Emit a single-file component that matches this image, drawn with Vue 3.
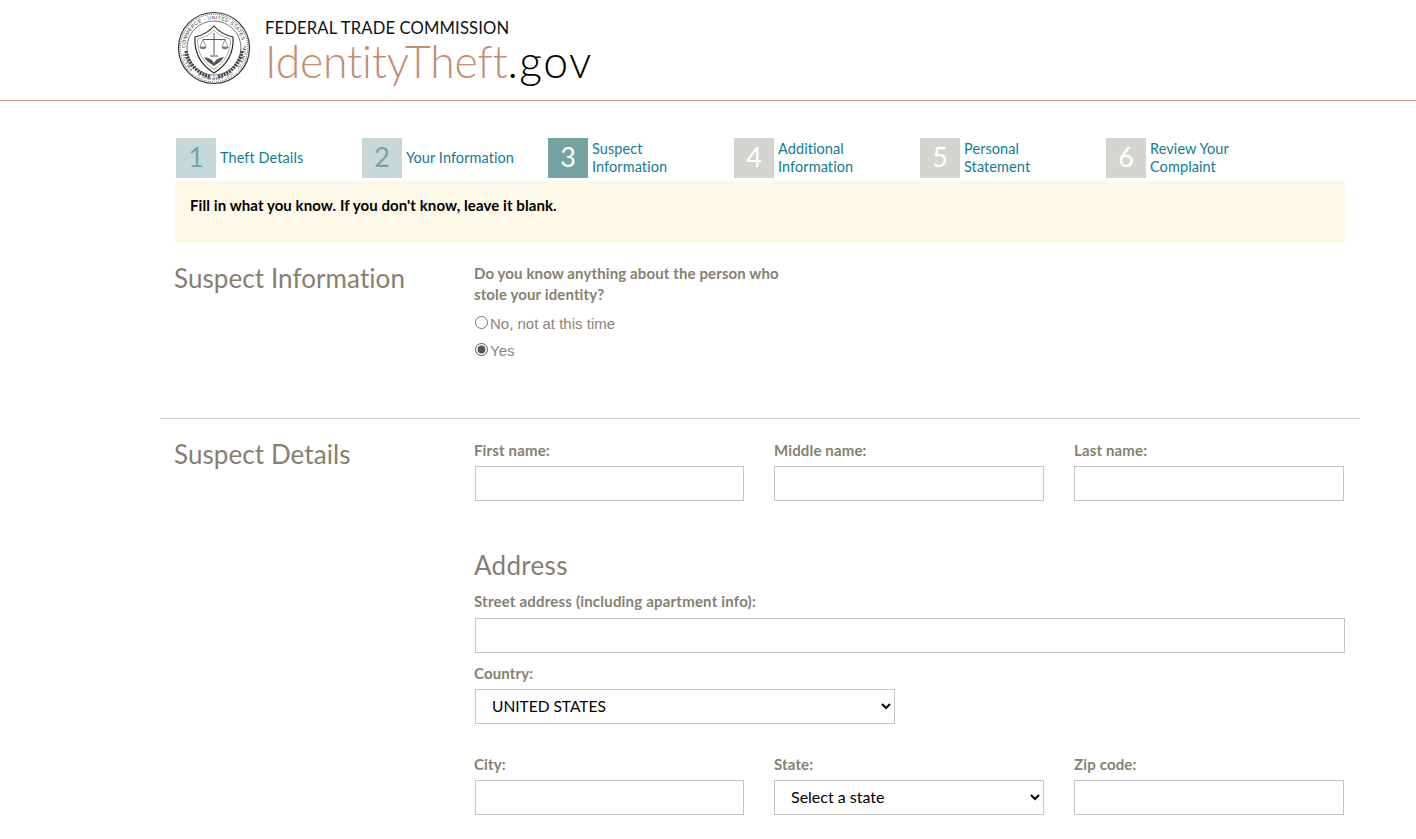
<script setup>
const steps = [
  { n: 1, label: 'Theft Details', state: 'done' },
  { n: 2, label: 'Your Information', state: 'done' },
  { n: 3, label: 'Suspect Information', state: 'active' },
  { n: 4, label: 'Additional Information', state: 'todo' },
  { n: 5, label: 'Personal Statement', state: 'todo' },
  { n: 6, label: 'Review Your Complaint', state: 'todo' }
]
</script>

<template>
  <div class="page">
    <header class="header">
      <div class="brand">
        <svg class="seal" viewBox="0 0 74 74" width="74" height="74" aria-hidden="true">
          <circle cx="37" cy="37" r="35.5" fill="#fff" stroke="#333" stroke-width="1.2" />
          <circle cx="37" cy="37" r="33.800" fill="none" stroke="#555" stroke-width="1" stroke-dasharray="1 1" />
          <circle cx="37" cy="37" r="27" fill="none" stroke="#555" stroke-width=".8" />
          <defs><path id="ring" d="M37 37m-28.800 0a28.800 28.800 0 1 1 57.600 0a28.800 28.800 0 1 1-57.600 0" /></defs>
          <text class="ring-text" textLength="176" lengthAdjust="spacing"><textPath href="#ring">COMMERCE · UNITED STATES · MCMXIV · OF AMERICA · TRADE</textPath></text>
          <path d="M9 40C11 52 20 62 33 66M65 40C63 52 54 62 41 66" fill="none" stroke="#444" stroke-width="3.400" stroke-dasharray="2 .9" />
          <path d="M18 26C26 24 33 20 37 15C41 20 48 24 56 26C57 42 50 54 37 62C24 54 17 42 18 26Z" fill="#fff" stroke="#2b2b2b" stroke-width="1.200" />
          <path d="M20.500 28C28 26 34 23 37 19C40 23 46 26 53.500 28C54 41 48 51 37 58.500C26 51 20 41 20.500 28Z" fill="none" stroke="#777" stroke-width=".6" />
          <path d="M37 22V44M26 28.500H48M33 45H41" stroke="#444" stroke-width=".9" fill="none" />
          <path d="M26 28.500L23 36H29ZM48 28.500L45 36H51Z" fill="none" stroke="#555" stroke-width=".6" />
          <path d="M22.500 36C23 39 29 39 29.500 36ZM44.500 36C45 39 51 39 51.500 36Z" fill="#777" />
          <path d="M27 46C32 47 35 48 37 52C39 48 42 47 47 46C44 51 41 52 37 55C33 52 30 51 27 46Z" fill="#555" />
        </svg>
        <div class="wordmark">
          <div class="agency">FEDERAL TRADE COMMISSION</div>
          <div class="site"><span class="site-accent">IdentityTheft</span>.gov</div>
        </div>
      </div>
    </header>

    <main class="container">
      <nav class="steps">
        <div v-for="s in steps" :key="s.n" class="step">
          <span class="num" :class="s.state">{{ s.n }}</span>
          <a class="step-label">{{ s.label }}</a>
        </div>
      </nav>

      <div class="notice">Fill in what you know. If you don't know, leave it blank.</div>

      <section class="row first">
        <h2 class="heading">Suspect Information</h2>
        <div class="content">
          <p class="question">Do you know anything about the person who<br />stole your identity?</p>
          <label class="radio"><input type="radio" name="know" />No, not at this time</label>
          <label class="radio"><input type="radio" name="know" checked />Yes</label>
        </div>
      </section>

      <section class="row second">
        <h2 class="heading">Suspect Details</h2>
        <div class="content">
          <div class="three">
            <div class="field"><label>First name:</label><input type="text" /></div>
            <div class="field"><label>Middle name:</label><input type="text" /></div>
            <div class="field"><label>Last name:</label><input type="text" /></div>
          </div>

          <h3 class="address">Address</h3>
          <div class="field street"><label>Street address (including apartment info):</label><input type="text" class="wide" /></div>
          <div class="field country">
            <label>Country:</label>
            <select class="country-select"><option>UNITED STATES</option></select>
          </div>
          <div class="three city-row">
            <div class="field"><label>City:</label><input type="text" /></div>
            <div class="field"><label>State:</label><select class="state-select"><option>Select a state</option></select></div>
            <div class="field"><label>Zip code:</label><input type="text" /></div>
          </div>
        </div>
      </section>
    </main>
  </div>
</template>

<style>
html, body { margin: 0; background: #fff; overflow: hidden; }
</style>

<style scoped>
.page {
  height: 839px;
  overflow: hidden;
  font-family: "Lato", "Liberation Sans", sans-serif;
  color: #86806f;
}
.header {
  height: 100px;
  border-bottom: 1px solid #c39a82;
  box-sizing: content-box;
}
.brand {
  display: flex;
  align-items: flex-start;
  margin-left: 177px;
  padding-top: 11px;
  gap: 14px;
}
.seal { display: block; flex: none; }
.ring-text { font: 5px "Liberation Sans", sans-serif; fill: #333; }
.wordmark { padding-top: 7px; }
.agency {
  font-size: 16.600px;
  line-height: 20px;
  color: #111;
  letter-spacing: .15px;
}
.site {
  font-weight: 300;
  font-size: 44.500px;
  line-height: 46px;
  color: #000;
  letter-spacing: 1.5px;
}
.site-accent { color: #c48d72; letter-spacing: -.2px; }
.container { width: 1200px; margin-left: 160px; }
.steps { display: flex; padding: 37px 0 0 16px; }
.step { width: 186px; display: flex; align-items: center; gap: 4px; height: 40px; }
.num {
  width: 40px;
  height: 40px;
  flex: none;
  box-sizing: border-box;
  padding-bottom: 3px;
  display: flex;
  align-items: center;
  justify-content: center;
  font-size: 27px;
}
.num.done { background: #c6d9d8; color: #75a39f; }
.num.active { background: #75a39f; color: #fff; }
.num.todo { background: #d5d5d0; color: #fff; }
.step-label {
  width: 110px;
  font-size: 14.500px;
  letter-spacing: .08px;
  line-height: 18px;
  color: #0e7c96;
}
.notice {
  margin: 3px 15px 0;
  height: 62px;
  box-sizing: border-box;
  padding: 15px;
  background: #fef8e8;
  color: #000;
  font-weight: 700;
  font-size: 15px;
  letter-spacing: .08px;
  line-height: 18px;
}
.row { display: flex; padding-left: 14px; }
.row.first { height: 175px; border-bottom: 1px solid #d5d5d0; }
.heading {
  width: 300px;
  flex: none;
  margin: 20px 0 0;
  font-weight: 400;
  font-size: 26px;
  letter-spacing: .08px;
  line-height: 30px;
  color: #86806f;
}
.content { width: 871px; }
.question {
  margin: 20px 0 5px;
  font-weight: 700;
  font-size: 15px;
  letter-spacing: .12px;
  line-height: 21px;
  color: #86806f;
}
.radio {
  display: flex;
  align-items: center;
  height: 27px;
  font-family: "Liberation Sans", sans-serif;
  font-size: 15px;
  color: #8a8578;
}
.radio input { width: 13px; height: 13px; margin: 0 2px 2px 1px; accent-color: #555; }
.row.second .content { padding-top: 21px; }
.three { display: grid; grid-template-columns: 270px 270px 270px; gap: 30px; }
.field label {
  display: block;
  font-weight: 700;
  font-size: 15px;
  letter-spacing: .15px;
  line-height: 20px;
  margin-bottom: 6px;
  color: #86806f;
}
.field input, .field select {
  display: block;
  box-sizing: border-box;
  width: 100%;
  height: 35px;
  border: 1px solid #c4c4c4;
  border-radius: 0;
  background: #fff;
  outline: none;
}
.three .field:first-child input { width: 269px; margin-left: 1px; }
.field select {
  padding: 0 0 2px 12px;
  color: #000;
  font-family: "Lato", sans-serif;
  font-size: 15.500px;
}
.field select.state-select { font-size: 16px; }
.field input.wide { width: 870px; margin-left: 1px; }
.field select.country-select { width: 420px; margin-left: 1px; }
.address {
  margin: 49px 0 0;
  font-weight: 400;
  font-size: 26px;
  letter-spacing: .3px;
  line-height: 30px;
  color: #86806f;
}
.street { margin-top: 11px; }
.street label { margin-bottom: 7px; letter-spacing: .2px; }
.country { margin-top: 10px; }
.city-row { margin-top: 30px; }
</style>
